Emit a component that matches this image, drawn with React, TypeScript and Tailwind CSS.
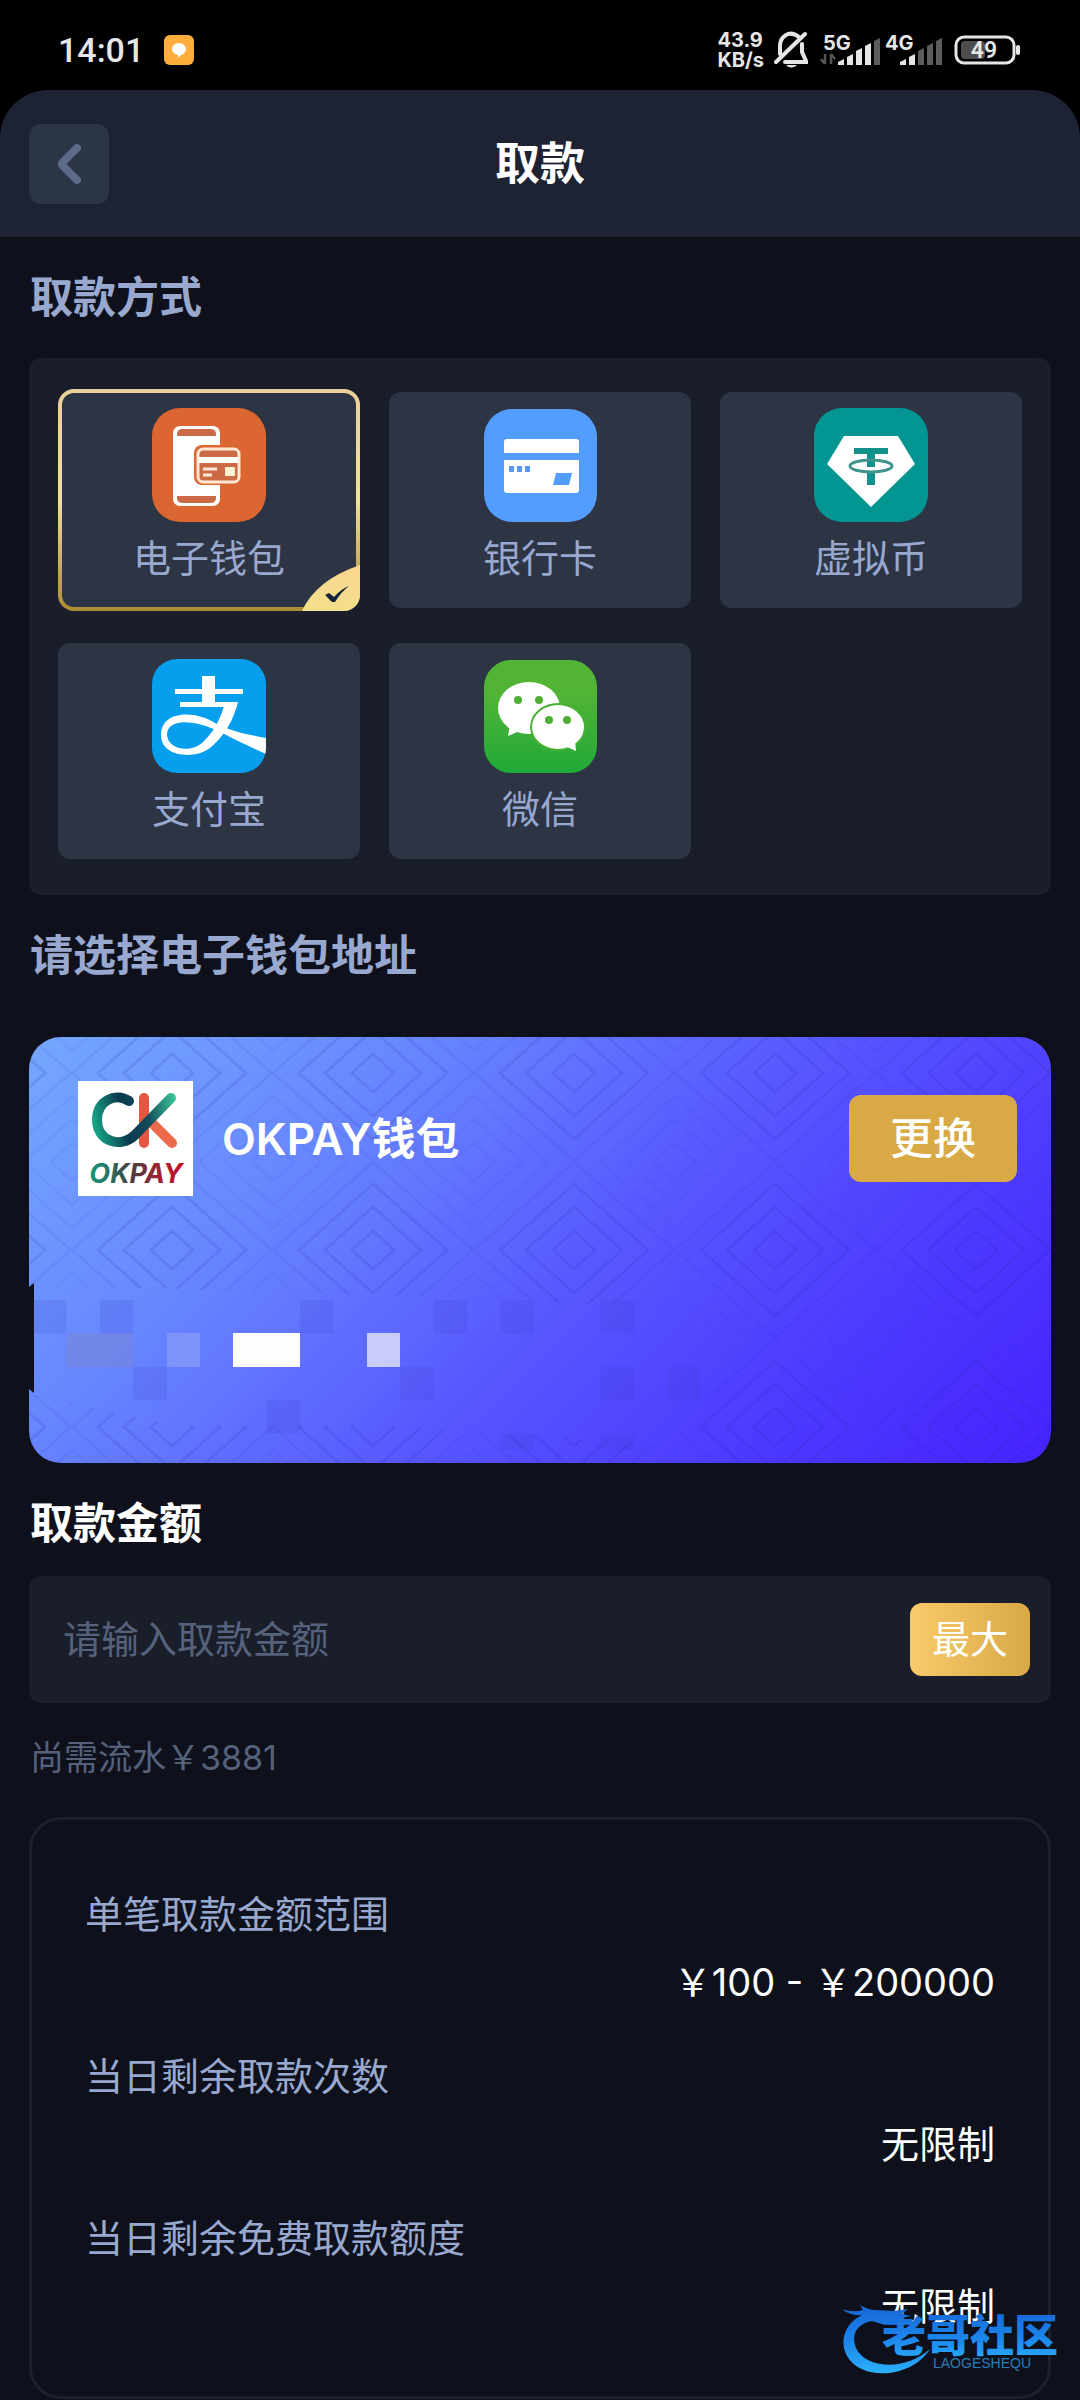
import { useState } from "react";
import type { ReactNode } from "react";

/* ===== Payment method icons ===== */
function WalletIcon() {
  return (
    <svg viewBox="0 0 114 114" className="size-full">
      <rect width="114" height="114" rx="28" fill="#dc6632" />
      <rect x="21" y="18" width="47" height="80" rx="7" fill="#fff" />
      <path d="M25 28v-2q0-5 6-5h27q6 0 6 5v2z" fill="#cb6a44" />
      <path d="M25 88v2q0 5 6 5h27q6 0 6-5v-2z" fill="#cb6a44" />
      <rect x="42" y="37" width="47" height="40" rx="8" fill="#dc6632" />
      <rect x="46" y="41" width="41" height="33" rx="5" fill="#cb6a44" stroke="#ffe9d6" strokeWidth="3" />
      <path d="M47 49h39v6H47z" fill="#fff" />
      <path d="M51 61h14M51 67h9" stroke="#ffe9d6" strokeWidth="3" />
      <rect x="73" y="59" width="10" height="9" rx="1" fill="#fff1cf" />
    </svg>
  );
}

function BankIcon() {
  return (
    <svg viewBox="0 0 114 114" className="size-full">
      <rect x="1" y="1" width="113" height="113" rx="28" fill="#529dff" />
      <path d="M21 34q0-3 3-3h69q3 0 3 3v11H21z" fill="#fff" />
      <path d="M21 52h75v30q0 3-3 3H24q-3 0-3-3z" fill="#fff" />
      <path d="M26 58h5v6h-5zM34 58h5v6h-5zM42 58h5v6h-5z" fill="#5b97ea" />
      <path d="M73 65h16l-3 12H70z" fill="#529dff" />
    </svg>
  );
}

function CoinIcon() {
  return (
    <svg viewBox="0 0 114 114" className="size-full">
      <rect width="114" height="114" rx="28" fill="#029592" />
      <path d="M30 28h54l17 28-44 43-44-43z" fill="#fff" />
      <path d="M40 40h34v6H61v13h-8V46H40z" fill="#12918a" />
      <path d="M53 64h8v13h-8z" fill="#12918a" />
      <ellipse cx="57" cy="58" rx="21" ry="6" fill="none" stroke="#3f958c" strokeWidth="3" />
    </svg>
  );
}

function AlipayIcon() {
  return (
    <svg viewBox="0 0 114 114" className="size-full">
      <clipPath id="alipay-clip">
        <rect width="114" height="114" rx="25" />
      </clipPath>
      <g clipPath="url(#alipay-clip)">
        <rect width="114" height="114" fill="#069fed" />
        <path d="M50 17h13v28H50z" fill="#fff" />
        <path d="M23 30h68v5H23zM28 43h57v5H28z" fill="#fff" />
        <path
          d="M86 43C82 60 72 78 58 89C42 101 8 98 9 75C10 52 42 51 63 64C80 73 98 76 114 79V95C98 88 82 80 68 73C45 61 15 58 15 76C16 91 40 95 52 82C62 73 69 58 72 47z"
          fill="#fff"
        />
      </g>
    </svg>
  );
}

function WechatIcon() {
  return (
    <svg viewBox="0 0 114 114" className="size-full">
      <defs>
        <linearGradient id="wechat-bg" x1="0" y1="0" x2="0" y2="1">
          <stop offset="0.3" stopColor="#51b435" />
          <stop offset="1" stopColor="#20a939" />
        </linearGradient>
      </defs>
      <rect x="1" y="1" width="113" height="113" rx="27" fill="url(#wechat-bg)" />
      <ellipse cx="46" cy="49" rx="31" ry="26" fill="#fff" />
      <path d="M27 66l-2 11 14-6z" fill="#fff" />
      <circle cx="35" cy="41" r="4" fill="#4fae38" />
      <circle cx="56" cy="41" r="4" fill="#4fae38" />
      <ellipse cx="75" cy="68" rx="28" ry="24" fill="#49b037" />
      <ellipse cx="75" cy="68" rx="26" ry="22" fill="#fff" />
      <path d="M82 87l11 5-1-11z" fill="#fff" />
      <circle cx="66" cy="61" r="4" fill="#4fae38" />
      <circle cx="84" cy="61" r="4" fill="#4fae38" />
    </svg>
  );
}

/* ===== Status bar ===== */
function Signal({ label, level, arrows }: { label: string; level: number; arrows?: boolean }) {
  const bars = [6, 11, 17, 22, 27];
  return (
    <svg viewBox="0 0 62 44" className="h-11 w-[62px]" fill="#e6e6e6">
      <text x="3" y="22" fontSize="20" fontWeight="700">
        {label}
      </text>
      {arrows && <path d="M5 26v10M1 31l4 5M11 36V26M15 31l-4-5" stroke="#555" strokeWidth="2.5" />}
      {bars.map((h, i) => (
        <path
          key={h}
          d={`M${18 + i * 9} ${37 - h + 3}l6-3v${h}h-6z`}
          fill={i < level ? "#e6e6e6" : "#5c5c5c"}
        />
      ))}
    </svg>
  );
}

function StatusBar() {
  return (
    <div className="flex h-[90px] items-center justify-between bg-black px-[58px] pt-[10px] text-[#e6e6e6]">
      <div className="flex items-center gap-5">
        <span className="font-[Roboto] text-[34px] leading-10 font-medium">14:01</span>
        <svg viewBox="0 0 30 30" className="size-[30px]">
          <rect width="30" height="30" rx="6" fill="#ffae3d" />
          <path d="M15 8c4 0 7 3 7 6s-2 5-5 6l-3 3v-3c-4-1-6-3-6-6s3-6 7-6z" fill="#fff" />
        </svg>
      </div>
      <div className="flex items-center">
        <div className="mr-[10px] text-[20px] leading-5 font-bold">
          <div>43.9</div>
          <div>KB/s</div>
        </div>
        <svg viewBox="0 0 34 38" className="mr-[12px] h-[38px] w-[34px]" fill="none" stroke="#e6e6e6" strokeWidth="4">
          <path d="M25 6C15-2 6 6 6 15v8M28 13v8l4 9v1H11M2 31L31 3" strokeLinecap="round" />
          <path d="M12 34q5 5 11 0z" fill="#e6e6e6" stroke="none" />
        </svg>
        <Signal label="5G" level={4} arrows />
        <Signal label="4G" level={2} />
        <svg viewBox="0 0 68 30" className="ml-[10px] h-[30px] w-[68px]">
          <rect x="2" y="2" width="58" height="26" rx="8" fill="none" stroke="#e6e6e6" strokeWidth="3" />
          <rect x="7" y="6" width="24" height="18" rx="4" fill="#4d4d4d" />
          <rect x="62" y="10" width="4" height="10" rx="2" fill="#e6e6e6" />
          <text x="30" y="23" fontSize="23" fontWeight="600" fontFamily="Roboto, sans-serif" textAnchor="middle" fill="#e6e6e6">
            49
          </text>
        </svg>
      </div>
    </div>
  );
}

/* ===== Wallet card artwork ===== */
const darkCells = [
  [0, 0], [2, 0], [8, 0], [12, 0], [14, 0], [17, 0],
  [3, 2], [11, 2], [17, 2], [19, 2],
  [7, 3], [14, 4], [17, 4],
];

function diamond(cx: number, cy: number, rx: number, ry: number) {
  return `M${cx - rx} ${cy}L${cx} ${cy - ry}L${cx + rx} ${cy}L${cx} ${cy + ry}Z`;
}

function CardArt() {
  const rings = [[21, 19], [48, 43], [74, 66]];
  const corners = [[0, 0], [201, 0], [0, 177], [201, 177]];
  return (
    <svg
      viewBox="0 0 1022 426"
      preserveAspectRatio="none"
      className="absolute inset-0 size-full"
      aria-hidden="true"
    >
      <defs>
        <linearGradient id="card-bg" gradientUnits="userSpaceOnUse" x1="150" y1="-150" x2="870" y2="570">
          <stop offset="0" stopColor="#74a8ff" />
          <stop offset="0.3" stopColor="#6683ff" />
          <stop offset="0.55" stopColor="#5858ff" />
          <stop offset="0.8" stopColor="#4c38ff" />
          <stop offset="1" stopColor="#4623ff" />
        </linearGradient>
        <pattern id="card-lines" patternUnits="userSpaceOnUse" x="43" y="-52" width="201" height="177">
          <g fill="none" stroke="#1c1f9c" strokeWidth="3">
            {rings.map(([rx, ry]) => (
              <path key={rx} d={diamond(100, 88, rx, ry)} strokeOpacity="0.13" />
            ))}
            <path d={diamond(100, 88, 100, 88)} strokeOpacity="0.07" />
            {corners.map(([cx, cy]) =>
              rings.map(([rx, ry]) => (
                <path key={`${cx}-${cy}-${rx}`} d={diamond(cx, cy, rx, ry)} strokeOpacity="0.05" />
              ))
            )}
          </g>
        </pattern>
      </defs>
      <rect width="1022" height="426" fill="url(#card-bg)" />
      <rect width="1022" height="426" fill="url(#card-lines)" />
      {/* masked account number */}
      <path d="M0 248L480 262L640 272L690 300V345L640 408L350 388H140L0 356Z" fill="url(#card-bg)" />
      <path d="M0 250l5-4v110l-5-4z" fill="#0e111b" />
      {darkCells.map(([i, j]) => (
        <rect
          key={`${i}-${j}`}
          x={4 + i * 33.4}
          y={263 + j * 33.4}
          width="33.4"
          height={j === 4 ? 16 : 33.4}
          fill="#3a3cc0"
          fillOpacity="0.14"
        />
      ))}
      <rect x="37" y="296" width="67" height="34" fill="#7a86d4" fillOpacity="0.5" />
      <rect x="138" y="296" width="33" height="34" fill="#8093fb" />
      <rect x="204" y="296" width="67" height="34" fill="#fbfdff" />
      <rect x="338" y="296" width="33" height="34" fill="#c9ccfa" />
    </svg>
  );
}

function OkpayLogo() {
  return (
    <svg viewBox="0 0 115 115" className="size-[115px] bg-white">
      <defs>
        <linearGradient id="ok-c" gradientUnits="userSpaceOnUse" x1="16" y1="40" x2="98" y2="20">
          <stop offset="0" stopColor="#16a283" />
          <stop offset="0.35" stopColor="#0b3a4f" />
          <stop offset="0.62" stopColor="#124b58" />
          <stop offset="1" stopColor="#3dc39a" />
        </linearGradient>
        <linearGradient id="ok-text" x1="0" y1="0" x2="1" y2="0">
          <stop offset="0" stopColor="#0f9a7c" />
          <stop offset="0.45" stopColor="#4b3c40" />
          <stop offset="0.75" stopColor="#a51f30" />
          <stop offset="1" stopColor="#c8102a" />
        </linearGradient>
      </defs>
      <g fill="none" strokeWidth="10" strokeLinecap="round">
        <path d="M66 17V62" stroke="#e5573f" />
        <path d="M72 40L94 62" stroke="#ee6a4d" />
        <path d="M51 20C37 11 19 20 19 39C19 60 42 68 57 54L93 17" stroke="url(#ok-c)" />
      </g>
      <text x="58" y="102" textAnchor="middle" fontSize="27" fontWeight="700" fontStyle="italic" fill="url(#ok-text)">
        OKPAY
      </text>
    </svg>
  );
}

function Watermark() {
  return (
    <div className="absolute right-[16px] bottom-[22px] h-[76px] w-[222px]" aria-hidden="true">
      <svg viewBox="0 0 222 76" className="size-full">
        <defs>
          <linearGradient id="mark" x1="0" y1="0" x2="0" y2="1">
            <stop offset="0" stopColor="#1767d8" />
            <stop offset="0.55" stopColor="#1c86ea" />
            <stop offset="1" stopColor="#2cb0fb" />
          </linearGradient>
        </defs>
        <path
          d="M0 7q10 4 21 1l-3-5q8 5 16 5l18 1 14-2-6 5 9 2-10 2 8 4-14 1-10 2-13-4C14 22 9 33 14 46C23 66 62 70 88 47C70 76 20 80 5 54C-4 37 5 20 20 13Q8 14 0 7z"
          fill="url(#mark)"
        />
        <text x="40" y="50" fontSize="44" fontWeight="900" fill="url(#mark)">
          老哥社区
        </text>
        <text x="91" y="66" fontSize="14" fill="#2a7fb8" fontFamily="Liberation Sans, sans-serif">
          LAOGESHEQU
        </text>
      </svg>
    </div>
  );
}

/* ===== Method tile ===== */
type TileProps = { label: string; icon: ReactNode; selected: boolean; onSelect: () => void };

function MethodTile({ label, icon, selected, onSelect }: TileProps) {
  return (
    <button
      type="button"
      aria-pressed={selected}
      onClick={onSelect}
      className="relative flex flex-col items-center rounded-xl bg-[#2d3545] pt-4 pb-[22px] text-[#98a8cf]"
    >
      {selected && (
        <span className="absolute inset-x-0 -inset-y-[3px] overflow-hidden rounded-2xl bg-linear-to-b from-[#ead09a] via-[#efe09a] to-[#ac8b35] p-1">
          <span className="block h-full rounded-xl bg-[#2d3545]" />
          <svg viewBox="0 0 58 46" className="absolute right-0 bottom-0 h-[46px] w-[58px]">
            <defs>
              <linearGradient id="corner" x1="0" y1="0" x2="0" y2="1">
                <stop offset="0" stopColor="#fbd690" />
                <stop offset="1" stopColor="#f3df8c" />
              </linearGradient>
            </defs>
            <path d="M0 46Q14 15 58 0V46z" fill="url(#corner)" />
            <path d="M23 30l4-2 5 4q7-8 15-11-8 6-14 16h-3z" fill="#14223c" />
          </svg>
        </span>
      )}
      <span className="relative size-[114px]">{icon}</span>
      <span className="relative mt-2 text-[38px] leading-[56px]">{label}</span>
    </button>
  );
}

const methods = [
  { label: "电子钱包", icon: <WalletIcon /> },
  { label: "银行卡", icon: <BankIcon /> },
  { label: "虚拟币", icon: <CoinIcon /> },
  { label: "支付宝", icon: <AlipayIcon /> },
  { label: "微信", icon: <WechatIcon /> },
];

const limits = [
  { label: "单笔取款金额范围", value: "￥100 - ￥200000" },
  { label: "当日剩余取款次数", value: "无限制" },
  { label: "当日剩余免费取款额度", value: "无限制" },
];

export default function App() {
  const [method, setMethod] = useState("电子钱包");
  const [amount, setAmount] = useState("");

  return (
    <div className="relative min-h-screen bg-[#0e111b] font-['Inter','Noto_Sans_CJK_SC',sans-serif] text-white">
      <StatusBar />

      {/* Header */}
      <div className="bg-black">
        <header className="grid h-[147px] grid-cols-[80px_1fr_80px] items-center rounded-t-[48px] bg-[#1e2334] px-[29px]">
          <button type="button" aria-label="返回" className="flex size-20 items-center justify-center rounded-xl bg-[#2c3546]">
            <svg viewBox="0 0 24 42" className="h-[42px] w-6" fill="none" stroke="#5a6a87" strokeWidth="8">
              <path d="M20 5L6 19q-2 2 0 4l14 14" strokeLinecap="round" strokeLinejoin="round" />
            </svg>
          </button>
          <h1 className="text-center text-[45px] leading-[60px] font-bold">取款</h1>
        </header>
      </div>

      <main className="px-[29px]">
        {/* Methods */}
        <h2 className="mt-[30px] mb-[31px] pl-px text-[43px] leading-[60px] font-bold text-[#98a8cf]">取款方式</h2>
        <div className="grid grid-cols-3 gap-x-[29px] gap-y-[35px] rounded-xl bg-[#1a1e2a] px-[29px] pt-[34px] pb-[36px]">
          {methods.map((m) => (
            <MethodTile
              key={m.label}
              label={m.label}
              icon={m.icon}
              selected={m.label === method}
              onSelect={() => setMethod(m.label)}
            />
          ))}
        </div>

        {/* Wallet card */}
        <h2 className="mt-[30px] mb-[52px] pl-px text-[43px] leading-[60px] font-bold text-[#98a8cf]">
          请选择电子钱包地址
        </h2>
        <section className="relative h-[426px] overflow-hidden rounded-[32px]">
          <CardArt />
          <div className="relative flex items-center pt-[44px] pr-[34px] pl-[49px]">
            <OkpayLogo />
            <span className="ml-[29px] text-[44px] leading-[60px] font-semibold">OKPAY钱包</span>
            <button type="button" className="ml-auto h-[87px] w-[168px] rounded-xl bg-[#d8a944] text-[43px] font-medium">
              更换
            </button>
          </div>
        </section>

        {/* Amount */}
        <h2 className="mt-[30px] mb-[23px] pl-px text-[43px] leading-[60px] font-bold">
          <label htmlFor="amount">取款金额</label>
        </h2>
        <div className="flex h-[127px] items-center rounded-xl bg-[#1a1e2a] pr-[21px] pl-[34px]">
          <input
            id="amount"
            inputMode="decimal"
            placeholder="请输入取款金额"
            value={amount}
            onChange={(e) => setAmount(e.target.value)}
            className="min-w-0 flex-1 bg-transparent text-[38px] outline-none placeholder:text-[#56627b]"
          />
          <button
            type="button"
            onClick={() => setAmount("200000")}
            className="h-[73px] w-[120px] rounded-xl bg-linear-to-r from-[#f8ca6b] to-[#d8a944] text-[38px]"
          >
            最大
          </button>
        </div>
        <p className="mt-[31px] pl-px text-[34px] leading-[48px] text-[#56627b]">尚需流水￥3881</p>

        {/* Limits */}
        <dl className="mt-[35px] flex flex-col gap-[26px] rounded-[32px] border-3 border-[#1c212c] px-[53px] pt-[60px] pb-[56px] text-[38px] leading-[68px]">
          {limits.map((l) => (
            <div key={l.label}>
              <dt className="text-[#98a8cf]">{l.label}</dt>
              <dd className="text-right">{l.value}</dd>
            </div>
          ))}
        </dl>
      </main>

      <Watermark />
    </div>
  );
}
